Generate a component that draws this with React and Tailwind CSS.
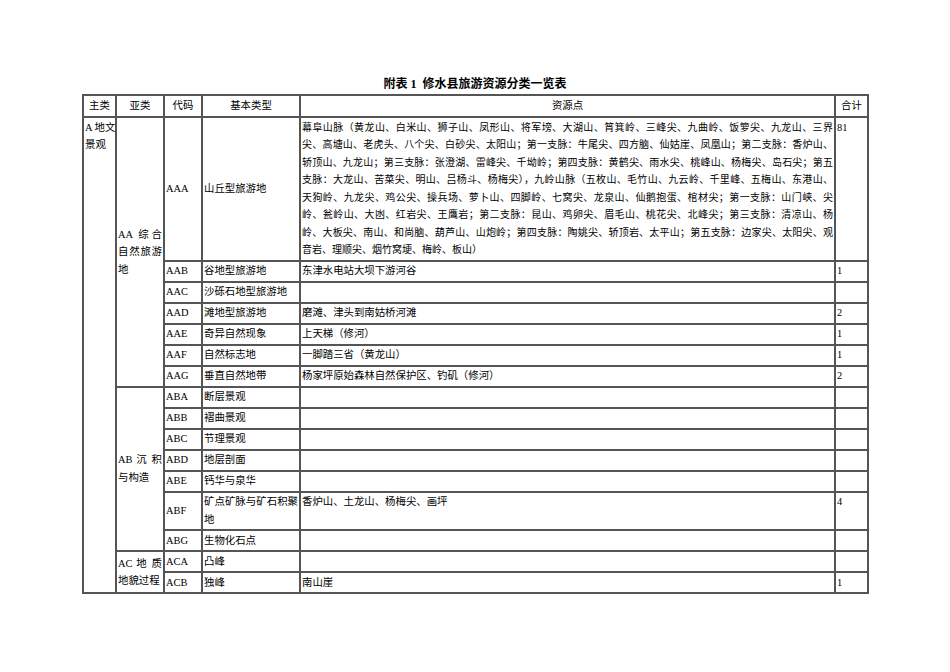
import React from 'react';

const AAA_LINES = [
  '幕阜山脉（黄龙山、白米山、狮子山、凤形山、将军塝、大湖山、筲箕岭、三峰尖、九曲岭、饭箩尖、九龙山、三界',
  '尖、高塘山、老虎头、八个尖、白砂尖、太阳山；第一支脉：牛尾尖、四方脑、仙姑崖、凤凰山；第二支脉：香炉山、',
  '轿顶山、九龙山；第三支脉：张澄湖、雷峰尖、千坳岭；第四支脉：黄鹤尖、雨水尖、桃峰山、杨梅尖、岛石尖；第五',
  '支脉：大龙山、苦菜尖、明山、吕杨斗、杨梅尖），九岭山脉（五枚山、毛竹山、九云岭、千里峰、五梅山、东港山、',
  '天狗岭、九龙尖、鸡公尖、操兵场、萝卜山、四脚岭、七窝尖、龙泉山、仙鹅抱蛋、棺材尖；第一支脉：山门峡、尖',
  '岭、瓮岭山、大凼、红岩尖、王鹰岩；第二支脉：昆山、鸡卵尖、眉毛山、桃花尖、北峰尖；第三支脉：清凉山、杨',
  '岭、大板尖、南山、和尚脑、葫芦山、山炮岭；第四支脉：陶姚尖、轿顶岩、太平山；第五支脉：边家尖、太阳尖、观',
  '音岩、理顺尖、烟竹窝埂、梅岭、板山）',
];

const GROUPS = [
  {
    sub: ['AA 综合', '自然旅游', '地'],
    rows: [
      { code: 'AAA', type: ['山丘型旅游地'], res: AAA_LINES, total: '81', dense: true },
      { code: 'AAB', type: ['谷地型旅游地'], res: ['东津水电站大坝下游河谷'], total: '1' },
      { code: 'AAC', type: ['沙砾石地型旅游地'], res: [], total: '' },
      { code: 'AAD', type: ['滩地型旅游地'], res: ['磨滩、津头到南姑桥河滩'], total: '2' },
      { code: 'AAE', type: ['奇异自然现象'], res: ['上天梯（修河）'], total: '1' },
      { code: 'AAF', type: ['自然标志地'], res: ['一脚踏三省（黄龙山）'], total: '1' },
      { code: 'AAG', type: ['垂直自然地带'], res: ['杨家坪原始森林自然保护区、钓矶（修河）'], total: '2' },
    ],
  },
  {
    sub: ['AB 沉 积', '与构造'],
    rows: [
      { code: 'ABA', type: ['断层景观'], res: [], total: '' },
      { code: 'ABB', type: ['褶曲景观'], res: [], total: '' },
      { code: 'ABC', type: ['节理景观'], res: [], total: '' },
      { code: 'ABD', type: ['地层剖面'], res: [], total: '' },
      { code: 'ABE', type: ['钙华与泉华'], res: [], total: '' },
      { code: 'ABF', type: ['矿点矿脉与矿石积聚', '地'], res: ['香炉山、土龙山、杨梅尖、画坪'], total: '4' },
      { code: 'ABG', type: ['生物化石点'], res: [], total: '' },
    ],
  },
  {
    sub: ['AC  地 质', '地貌过程'],
    rows: [
      { code: 'ACA', type: ['凸峰'], res: [], total: '' },
      { code: 'ACB', type: ['独峰'], res: ['南山崖'], total: '1' },
    ],
  },
];

const cell = 'border-2 border-[#555] px-[1px] py-[0.75px]';

// lines except the last are stretched edge to edge, like the Word cell
function Lines({ lines }) {
  return lines.map((l, i) => (
    <div key={i} className={i < lines.length - 1 ? 'whitespace-nowrap text-justify [text-align-last:justify]' : 'whitespace-nowrap'}>
      {l}
    </div>
  ));
}

export default function App() {
  const rowCount = GROUPS.reduce((n, g) => n + g.rows.length, 0);

  return (
    <div className="min-h-screen bg-white pt-[77px] text-black font-['Liberation_Serif','Noto_Sans_CJK_SC',serif]">
      <h1 className="mb-[3px] text-center text-[12px] leading-[14px] font-bold">附表 1&nbsp; 修水县旅游资源分类一览表</h1>

      <table className="ml-[82px] w-[785px] table-fixed border-collapse border-2 border-[#555] text-[10.4px] leading-[17.5px]">
        <colgroup>
          <col className="w-[33px]" />
          <col className="w-[48px]" />
          <col className="w-[38px]" />
          <col className="w-[98px]" />
          <col className="w-[535px]" />
          <col className="w-[33px]" />
        </colgroup>
        <thead>
          <tr>
            {['主类', '亚类', '代码', '基本类型', '资源点', '合计'].map(h => (
              <th key={h} className="border-2 border-[#555] px-[1px] py-[1.25px] text-center font-normal">{h}</th>
            ))}
          </tr>
        </thead>
        <tbody>
          {GROUPS.map((g, gi) =>
            g.rows.map((r, ri) => (
              <tr key={r.code}>
                {gi === 0 && ri === 0 && (
                  <td rowSpan={rowCount} className={`${cell} align-top`}>
                    <Lines lines={['A 地文', '景观']} />
                  </td>
                )}
                {ri === 0 && (
                  <td rowSpan={g.rows.length} className={`${cell} align-middle`}>
                    <Lines lines={g.sub} />
                  </td>
                )}
                <td className={`${cell} align-middle`}>{r.code}</td>
                <td className={`${cell} align-middle`}>
                  <Lines lines={r.type} />
                </td>
                <td className={`${cell} align-top ${r.dense ? 'text-[10px]' : ''}`}>
                  {r.res.length ? <Lines lines={r.res} /> : <div>&nbsp;</div>}
                </td>
                <td className={`${cell} align-top`}>{r.total}</td>
              </tr>
            ))
          )}
        </tbody>
      </table>
    </div>
  );
}
